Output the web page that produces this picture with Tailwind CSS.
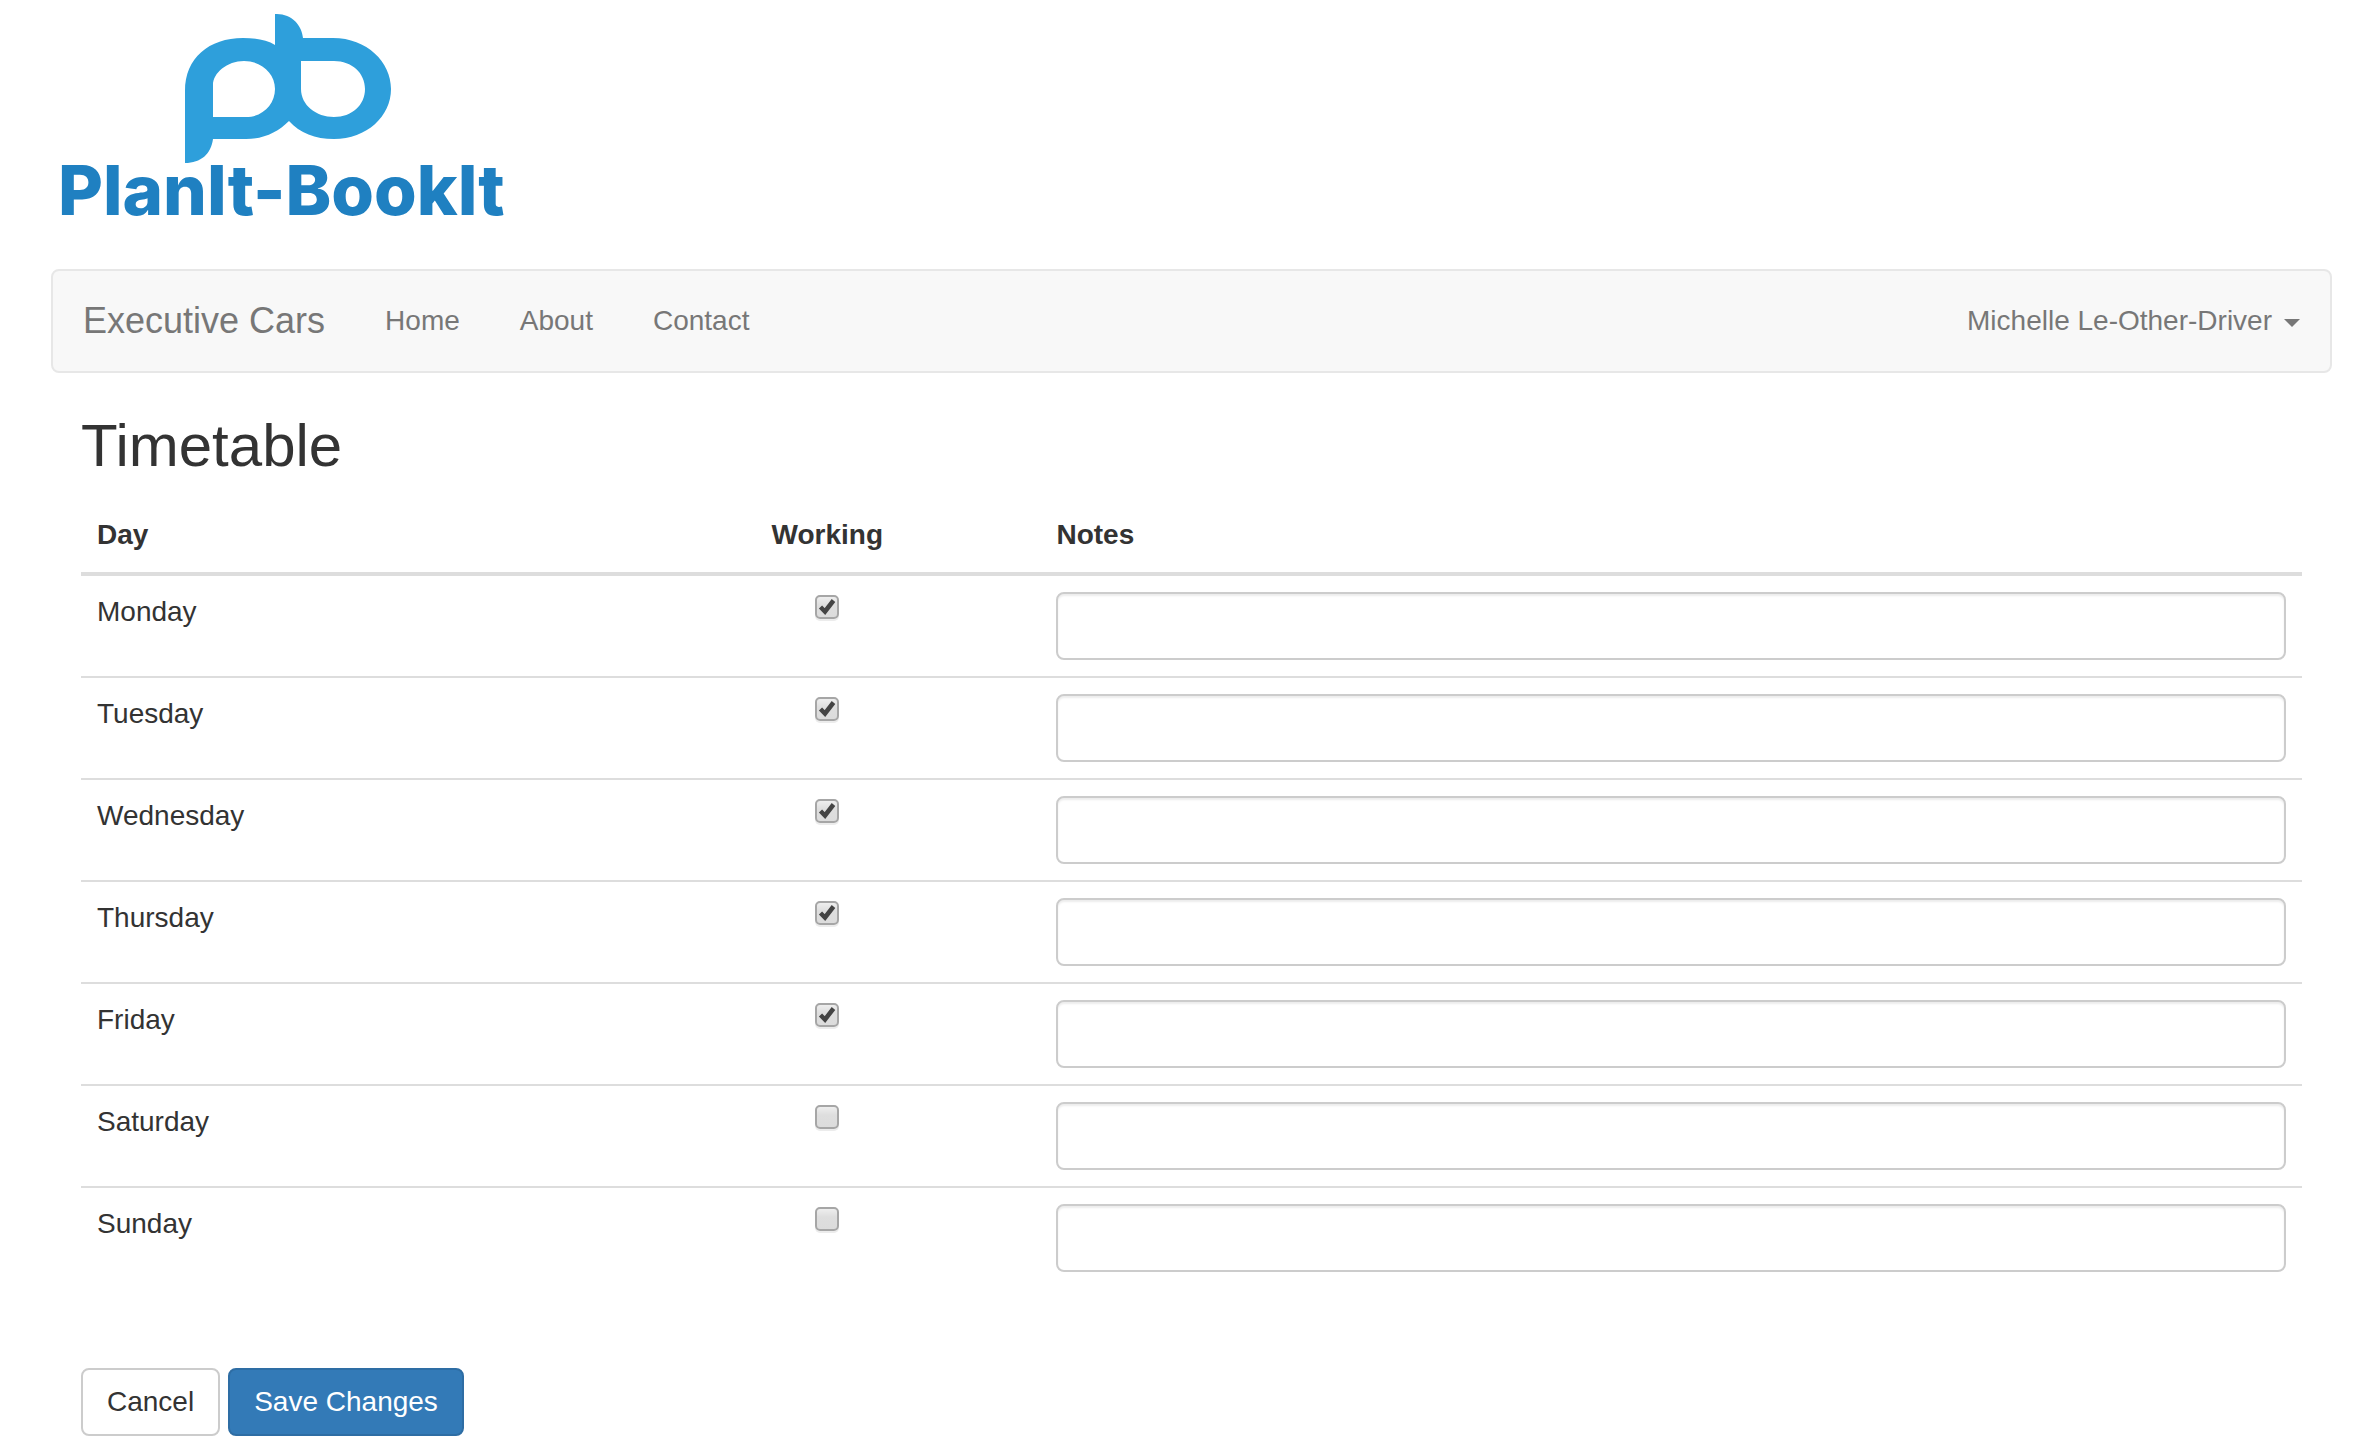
<!DOCTYPE html>
<html lang="en">
<head>
<meta charset="utf-8">
<title>Timetable</title>
<script src="https://cdn.jsdelivr.net/npm/@tailwindcss/browser@4"></script>
</head>
<body class="bg-white font-['Liberation_Sans',Arial,sans-serif] text-[28px] leading-10 text-[#333]">
<div class="pl-[51px] pr-[30px] pb-3">
  <header class="pb-[29px]">
    <a href="#" aria-label="PlanIt-BookIt" class="block w-[460px]">
      <svg viewBox="0 0 460 240" class="block h-[240px] w-[460px]">
        <path fill="#2e9fdb" fill-rule="evenodd" d="M224 14C240 13 251 25 252 38H282C316 38 340 62 340 89C340 116 316 139 283 139C264 139 249 133 238 121C227 132 213 139 195 139H162C160 154 150 163 134 163V91C134 58 158 38 192 38C205 38 216 40 224 45ZM162 117H195C212 117 224 104 224 89C224 73 210 61 193 61C176 61 162 73 162 85ZM250 61V89C250 105 265 117 283 117C301 117 314 105 314 89C314 73 301 61 283 61Z"/>
        <text x="7" y="215" font-family="Inter, sans-serif" font-weight="800" font-size="69" fill="#1f80c1">PlanIt-BookIt</text>
      </svg>
    </a>
  </header>
  <nav class="flex h-[104px] items-center justify-between rounded-lg border-2 border-[#e7e7e7] bg-[#f8f8f8] px-[30px] text-[#777]">
    <div class="flex items-center gap-[60px]">
      <a href="#" class="text-[36px]">Executive Cars</a>
      <a href="#">Home</a>
      <a href="#">About</a>
      <a href="#">Contact</a>
    </div>
    <button type="button" class="flex items-center gap-3">Michelle Le-Other-Driver
      <svg viewBox="0 0 16 8" class="mt-1 h-2 w-4"><path d="M0 0H16L8 8Z" fill="currentColor"/></svg>
    </button>
  </nav>
  <main class="px-[30px]">
    <h2 class="pt-10 pb-5 text-[60px] leading-[66px]">Timetable</h2>
    <form>
      <table class="w-full table-fixed border-separate border-spacing-0">
        <colgroup><col class="w-[24%]"><col class="w-[19.2%]"><col></colgroup>
        <thead>
          <tr class="text-left">
            <th class="border-b-4 border-[#ddd] px-4 pt-4 pb-[17px]">Day</th>
            <th class="border-b-4 border-[#ddd] px-4 pt-4 pb-[17px] text-center">Working</th>
            <th class="border-b-4 border-[#ddd] px-4 pt-4 pb-[17px]">Notes</th>
          </tr>
        </thead>
        <tbody id="days"></tbody>
      </table>
      <div class="mt-20 flex gap-2">
        <button type="button" class="rounded-lg border-2 border-[#ccc] bg-white px-6 py-3">Cancel</button>
        <button type="submit" class="rounded-lg border-2 border-[#2e6da4] bg-[#337ab7] px-6 py-3 text-white">Save Changes</button>
      </div>
    </form>
  </main>
</div>
<template id="row">
  <tr class="group">
    <td class="border-[#ddd] p-4 align-top group-not-last:border-b-2"></td>
    <td class="border-[#ddd] px-4 pt-[19px] text-center align-top group-not-last:border-b-2">
      <span class="inline-grid align-top">
        <input type="checkbox" class="peer col-start-1 row-start-1 size-6 appearance-none rounded-[5px] border-2 border-[#a6a6a6] bg-linear-to-b from-[#eee] via-[#dedede] via-40% to-[#dcdcdc] shadow-[0_2px_0_#ececec]">
        <svg viewBox="0 0 24 24" class="pointer-events-none col-start-1 row-start-1 hidden size-6 peer-checked:block"><path d="M5.500 12L10 16.500L18.500 5.500" fill="none" stroke="#444" stroke-width="4.500"/></svg>
      </span>
    </td>
    <td class="border-[#ddd] p-4 align-top group-not-last:border-b-2">
      <input type="text" class="block h-[68px] w-full rounded-lg border-2 border-[#ccc] bg-white px-6 shadow-[inset_0_2px_2px_rgba(0,0,0,0.075)]">
    </td>
  </tr>
</template>
<script>
  const days = ['Monday', 'Tuesday', 'Wednesday', 'Thursday', 'Friday', 'Saturday', 'Sunday'];
  days.forEach((day, i) => {
    const row = document.getElementById('row').content.cloneNode(true);
    row.querySelector('td').textContent = day;
    const [box, note] = row.querySelectorAll('input');
    box.checked = i < 5;
    box.setAttribute('aria-label', day + ' working');
    note.setAttribute('aria-label', day + ' notes');
    document.getElementById('days').append(row);
  });
</script>
</body>
</html>
